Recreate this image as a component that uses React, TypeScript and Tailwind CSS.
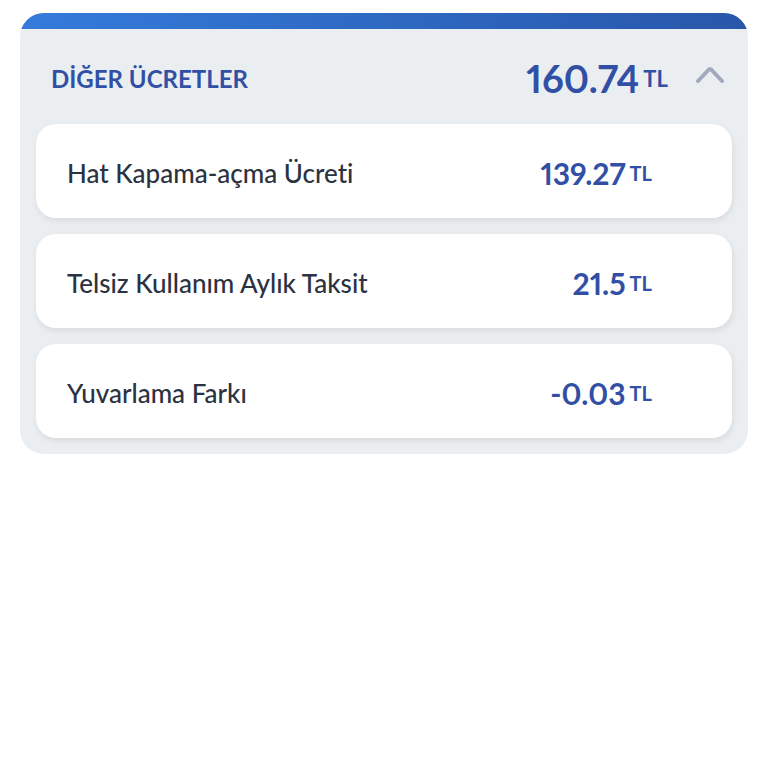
import React, { useState } from 'react';

const fees = [
  { name: 'Hat Kapama-açma Ücreti', amount: '139.27' },
  { name: 'Telsiz Kullanım Aylık Taksit', amount: '21.5' },
  { name: 'Yuvarlama Farkı', amount: '-0.03' },
];

const App: React.FC = () => {
  const [open, setOpen] = useState(true);

  return (
    <main className="min-h-screen bg-white px-5 py-[13px] font-['Lato',sans-serif] [font-variant-ligatures:none]">
      <section className="overflow-hidden rounded-3xl bg-[#ebeef1]">
        <div className="h-4 bg-linear-to-r from-[#347bdb] to-[#2857aa]" />

        <button
          type="button"
          aria-expanded={open}
          onClick={() => setOpen(!open)}
          className="flex h-[95px] w-full items-center pt-1 pr-6 pl-[31px] text-[#3150a5]"
        >
          <span className="flex-1 text-left text-[24px] font-bold">DİĞER ÜCRETLER</span>
          <span className="flex items-center gap-1">
            <span className="text-[38px] font-bold proportional-nums">160.74</span>
            <span className="text-[22px] font-bold">TL</span>
          </span>
          <svg
            viewBox="0 0 28 18"
            className={open ? 'mb-2 ml-7 h-[18px] w-7' : 'mb-2 ml-7 h-[18px] w-7 rotate-180'}
            fill="none"
            stroke="#a1a9bc"
            strokeWidth="4"
            strokeLinecap="round"
            strokeLinejoin="round"
          >
            <path d="M2 15 12.4 4Q14 2.4 15.6 4L26 15" />
          </svg>
        </button>

        {open && (
          <ul className="flex flex-col gap-4 px-4 pb-4">
            {fees.map((fee) => (
              <li
                key={fee.name}
                className="flex h-[94px] items-center justify-between rounded-[20px] bg-white pt-1 pr-20 pl-[31px] shadow-[1px_3px_6px_rgba(0,0,0,0.08)]"
              >
                <span className="text-[26px] font-medium text-[#2b3242]">{fee.name}</span>
                <span className="flex items-center gap-1 text-[#3150a5]">
                  <span className="text-[30px] font-bold proportional-nums">{fee.amount}</span>
                  <span className="text-[20px] font-bold">TL</span>
                </span>
              </li>
            ))}
          </ul>
        )}
      </section>
    </main>
  );
};

export default App;
